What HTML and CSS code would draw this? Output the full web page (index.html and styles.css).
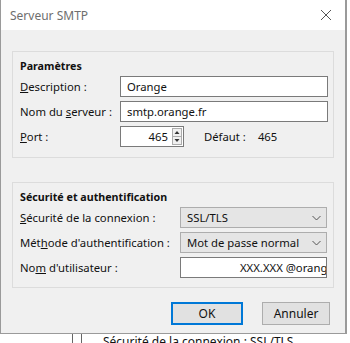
FILE: index.html
```html
<!DOCTYPE html>
<html lang="fr">
<head>
  <meta charset="UTF-8" />
  <title>Serveur SMTP</title>
  <link rel="stylesheet" href="styles.css">
</head>
<body>

  <div class="dialog">
    <header class="dialog--title">
      <span>Serveur SMTP</span>
      <svg class="dialog--close" width="12" height="12" viewBox="0 0 12 12">
        <path d="M1 1 L11 11 M11 1 L1 11" stroke="#555" stroke-width="1" fill="none" />
      </svg>
    </header>

    <div class="dialog--body">
      <!-- Paramètres -->
      <section class="group group-params">
        <h2 class="group--title">Paramètres</h2>
        <div class="fields">
          <label class="field--label"><u>D</u>escription :</label>
          <div class="textbox">Orange</div>

          <label class="field--label">Nom du <u>s</u>erveur :</label>
          <div class="textbox">smtp.orange.fr</div>

          <label class="field--label"><u>P</u>ort :</label>
          <div class="port-row">
            <div class="textbox port">
              <span class="port--value">465</span>
              <svg class="spin" width="10" height="17" viewBox="0 0 10 17">
                <rect x="0.5" y="0.5" width="9" height="16" fill="#f0f0f0" stroke="#acacac" />
                <line x1="0.5" y1="8.5" x2="9.5" y2="8.5" stroke="#acacac" />
                <path d="M2.5 6 L5 3 L7.5 6 Z" fill="#333" />
                <path d="M2.5 11 L5 14 L7.5 11 Z" fill="#333" />
              </svg>
            </div>
            <span class="default-label">Défaut :</span>
            <span class="default-value">465</span>
          </div>
        </div>
      </section>

      <!-- Sécurité -->
      <section class="group group-security">
        <h2 class="group--title">Sécurité et authentification</h2>
        <div class="fields fields-wide">
          <label class="field--label"><u>S</u>écurité de la connexion :</label>
          <div class="combo">
            <span>SSL/TLS</span>
            <svg width="9" height="6" viewBox="0 0 9 6"><path d="M0.5 1 L4.5 5 L8.5 1" stroke="#555" fill="none" /></svg>
          </div>

          <label class="field--label">Mét<u>h</u>ode d'authentification :</label>
          <div class="combo">
            <span>Mot de passe normal</span>
            <svg width="9" height="6" viewBox="0 0 9 6"><path d="M0.5 1 L4.5 5 L8.5 1" stroke="#555" fill="none" /></svg>
          </div>

          <label class="field--label">No<u>m</u> d'utilisateur :</label>
          <div class="textbox user">XXX.XXX @orange.fr</div>
        </div>
      </section>

      <div class="buttons">
        <button class="btn btn-default">OK</button>
        <button class="btn">Annuler</button>
      </div>
    </div>
  </div>

  <div class="behind">
    <span class="behind--line"></span>
    <span class="behind--line second"></span>
    <span class="behind--text">Sécurité de la connexion : SSL/TLS</span>
  </div>

</body>
</html>
```

FILE: styles.css
```css
* { box-sizing: border-box; margin: 0; padding: 0; }

html, body {
  width: 350px;
  height: 343px;
  overflow: hidden;
  background-color: #fff;
}

body {
  font-family: 'Noto Sans', 'Open Sans', sans-serif;
  font-size: 11.3px;
  color: #111;
}

.dialog {
  width: 347px;
  height: 334px;
  border-left: 1px solid #9a9a9a;
  border-right: 2px solid #9a9a9a;
  border-bottom: 1px solid #9a9a9a;
  background-color: #f0f0f0;
}

.dialog--title {
  height: 30px;
  background-color: #fff;
  display: flex;
  align-items: center;
  justify-content: space-between;
  padding: 0 10px 0 9px;
  font-size: 12px;
  color: #6e6e6e;
}

.dialog--close {
  margin-right: 3px;
}

.dialog--body {
  padding: 21px 11px 0 11px;
}

.group {
  border: 1px solid #dcdcdc;
  padding: 6px 5px 0 7px;
}

.group-params {
  height: 107px;
}

.group-security {
  height: 106px;
  margin-top: 24px;
}

.group--title {
  font-size: 10.7px;
  font-weight: bold;
  height: 16px;
  line-height: 16px;
  margin-bottom: 2px;
}

.fields {
  display: grid;
  grid-template-columns: 100px 208px;
  grid-auto-rows: 21px;
  row-gap: 4px;
  align-items: center;
}

.fields-wide {
  grid-template-columns: 160px 147px;
}

.field--label {
  white-space: nowrap;
}

.textbox {
  width: 100%;
  height: 21px;
  border: 1px solid #7a7a7a;
  background-color: #fff;
  padding: 0 6px;
  line-height: 19px;
  white-space: nowrap;
  overflow: hidden;
}

.port-row {
  display: flex;
  align-items: center;
}

.textbox.port {
  width: 64px;
  display: flex;
  align-items: center;
  justify-content: flex-end;
  padding: 0 1px 0 0;
}

.port--value {
  margin-right: 4px;
}

.spin {
  display: block;
}

.default-label {
  margin-left: 20px;
}

.default-value {
  margin-left: 12px;
}

.textbox.user {
  padding-left: 59px;
}

.combo {
  height: 21px;
  border: 1px solid #adadad;
  background-color: #e5e5e5;
  display: flex;
  align-items: center;
  justify-content: space-between;
  padding: 0 5px 0 6px;
  white-space: nowrap;
}

.buttons {
  display: flex;
  justify-content: flex-end;
  gap: 19px;
  margin-top: 14px;
  padding-right: 4px;
}

.btn {
  width: 68px;
  height: 23px;
  font-family: inherit;
  font-size: 12px;
  color: #111;
  background-color: #e1e1e1;
  border: 1px solid #adadad;
}

.btn-default {
  width: 72px;
  border: 2px solid #0078d7;
}

.behind {
  position: relative;
  height: 9px;
  overflow: hidden;
}

.behind--line {
  position: absolute;
  left: 72px;
  top: 0;
  width: 1px;
  height: 9px;
  background-color: #666;
}

.behind--line.second {
  left: 81px;
}

.behind--text {
  position: absolute;
  left: 103px;
  top: -1px;
  white-space: nowrap;
  font-size: 12px;
  color: #111;
}
```
